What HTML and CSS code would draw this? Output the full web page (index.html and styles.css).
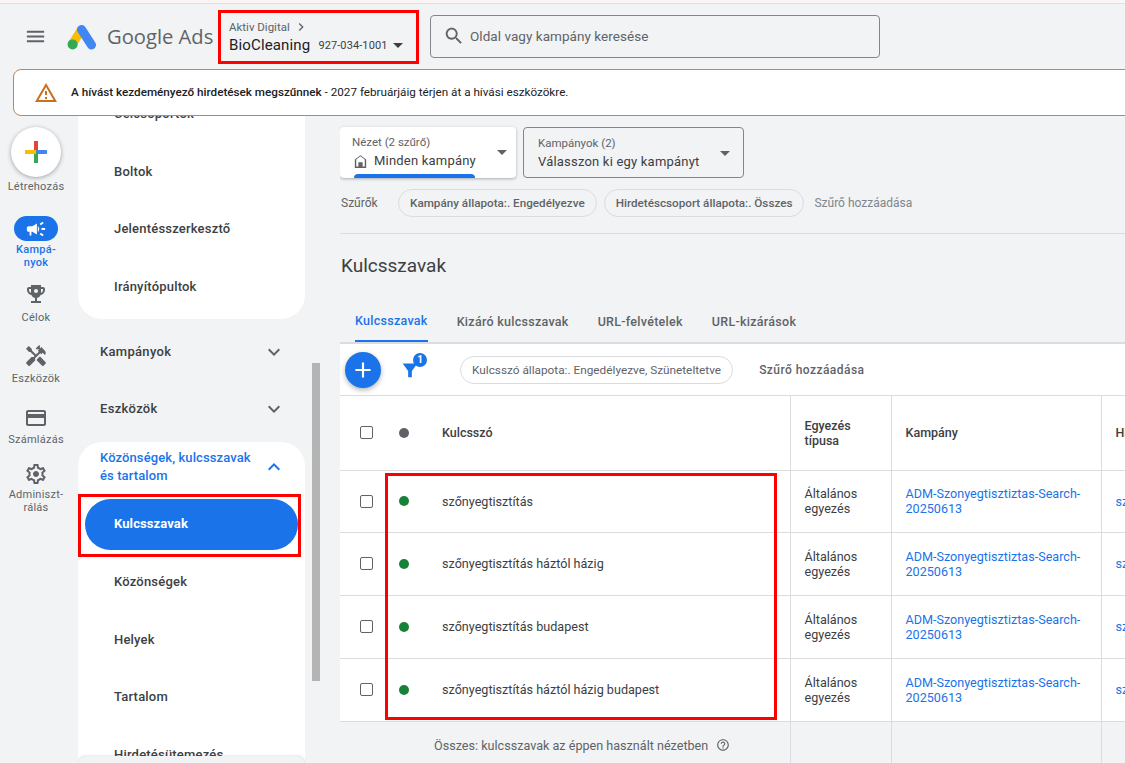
FILE: index.html
```html
<!DOCTYPE html>
<html lang="hu">
<head>
<meta charset="utf-8">
<title>Google Ads – Kulcsszavak</title>
<link rel="stylesheet" href="styles.css">
</head>
<body>
<div class="app">
  <div class="topline"></div>
  <header class="header">
    <svg class="menu-icon" viewBox="0 0 24 24"><path d="M3 18h18v-2H3v2zm0-5h18v-2H3v2zm0-7v2h18V6H3z"/></svg>
    <svg class="ads-logo" viewBox="0 0 30 26">
      <path d="M14.5 5.5 5.5 20" stroke="#fbbc04" stroke-width="9" fill="none"/>
      <path d="M14.5 5.5 24.5 21" stroke="#4285f4" stroke-width="9" stroke-linecap="round" fill="none"/>
      <circle cx="5.6" cy="20.4" r="5" fill="#34a853"/>
    </svg>
    <span class="ads-name">Google Ads</span>
    <div class="account">
      <div class="account-top">Aktiv Digital
        <svg class="crumb-icon" viewBox="0 0 24 24"><path d="M10 6L8.59 7.41 13.17 12l-4.58 4.59L10 18l6-6z"/></svg>
      </div>
      <div class="account-main"><span class="account-name">BioCleaning</span><span class="account-id">927-034-1001</span><span class="caret caret-dark"></span></div>
    </div>
    <div class="search">
      <svg class="search-icon" viewBox="0 0 24 24"><path d="M15.5 14h-.79l-.28-.27C15.41 12.59 16 11.11 16 9.5 16 5.91 13.09 3 9.5 3S3 5.91 3 9.5 5.91 16 9.5 16c1.61 0 3.09-.59 4.23-1.57l.27.28v.79l5 4.99L20.49 19l-4.99-5zm-6 0C7.01 14 5 11.99 5 9.5S7.01 5 9.5 5 14 7.01 14 9.5 11.99 14 9.5 14z"/></svg>
      <span>Oldal vagy kampány keresése</span>
    </div>
  </header>

  <div class="alert">
    <svg class="alert-icon" viewBox="0 0 24 24"><path d="M12 5.99L19.53 19H4.47L12 5.99M12 2L1 21h22L12 2zm1 14h-2v2h2v-2zm0-6h-2v4h2v-4z"/></svg>
    <p class="alert-text"><strong>A hívást kezdeményező hirdetések megszűnnek</strong> - 2027 februárjáig térjen át a hívási eszközökre.</p>
  </div>

  <div class="workspace">
    <nav class="rail">
      <button class="create" type="button" aria-label="Létrehozás">
        <svg class="create-plus" viewBox="0 0 24 24">
          <rect x="10" y="1" width="4" height="11" fill="#ea4335"/>
          <rect x="12" y="10" width="11" height="4" fill="#4285f4"/>
          <rect x="10" y="12" width="4" height="11" fill="#34a853"/>
          <rect x="1" y="10" width="11" height="4" fill="#fbbc04"/>
        </svg>
      </button>
      <span class="rail-label rail-label-create">Létrehozás</span>
      <div class="rail-item rail-item-active">
        <span class="rail-pill">
          <svg class="rail-icon-white" viewBox="0 0 24 24"><path d="M18 11v2h4v-2h-4zm-2 6.61c.96.71 2.21 1.65 3.2 2.39.4-.53.8-1.07 1.2-1.6-.99-.74-2.24-1.68-3.2-2.4-.4.54-.8 1.08-1.2 1.61zM20.4 5.6c-.4-.53-.8-1.07-1.2-1.6-.99.74-2.24 1.68-3.2 2.4.4.53.8 1.07 1.2 1.6.96-.72 2.21-1.65 3.2-2.4zM4 9c-1.1 0-2 .9-2 2v2c0 1.1.9 2 2 2h1v4h2v-4h1l5 3V6L8 9H4zm11.5 3c0-1.33-.58-2.53-1.5-3.35v6.69c.92-.81 1.5-2.01 1.5-3.34z"/></svg>
        </span>
        <span class="rail-label">Kampá-<br>nyok</span>
      </div>
      <div class="rail-item rail-item-goals">
        <svg class="rail-icon" viewBox="0 0 24 24"><path d="M19 5h-2V3H7v2H5c-1.1 0-2 .9-2 2v1c0 2.55 1.92 4.63 4.39 4.94.63 1.5 1.98 2.63 3.61 2.96V19H7v2h10v-2h-4v-3.1c1.63-.33 2.98-1.46 3.61-2.96C19.08 12.63 21 10.55 21 8V7c0-1.1-.9-2-2-2zM5 8V7h2v3.82C5.84 10.4 5 9.3 5 8zm14 0c0 1.3-.84 2.4-2 2.82V7h2v1z"/><circle cx="12" cy="9" r="2" fill="#f1f3f4"/></svg>
        <span class="rail-label">Célok</span>
      </div>
      <div class="rail-item rail-item-tools">
        <svg class="rail-icon" viewBox="0 0 24 24"><path d="M21.67 18.17l-5.3-5.3h-.99l-2.54 2.54v.99l5.3 5.3c.39.39 1.02.39 1.41 0l2.12-2.12c.39-.38.39-1.02 0-1.41z"/><path d="M17.34 10.19l1.41-1.41 2.12 2.12c1.17-1.17 1.17-3.07 0-4.24l-3.54-3.54-1.41 1.41V1.71l-.7-.71-3.54 3.54.71.71h2.83l-1.41 1.41 1.06 1.06-2.89 2.89-4.13-4.13V5.06L4.83 2.04 2 4.87 5.03 7.9h1.41l4.13 4.13-.85.85H7.61l-5.3 5.3c-.39.39-.39 1.02 0 1.41l2.12 2.12c.39.39 1.02.39 1.41 0l5.3-5.3v-2.12l5.15-5.15 1.05 1.05z"/></svg>
        <span class="rail-label">Eszközök</span>
      </div>
      <div class="rail-item rail-item-bill">
        <svg class="rail-icon" viewBox="0 0 24 24"><path d="M20 4H4c-1.11 0-1.99.89-1.99 2L2 18c0 1.11.89 2 2 2h16c1.11 0 2-.89 2-2V6c0-1.11-.89-2-2-2zm0 14H4v-6h16v6zm0-10H4V6h16v2z"/></svg>
        <span class="rail-label">Számlázás</span>
      </div>
      <div class="rail-item rail-item-admin">
        <svg class="rail-icon" viewBox="0 0 24 24"><path d="M19.43 12.98c.04-.32.07-.64.07-.98 0-.34-.03-.66-.07-.98l2.11-1.65c.19-.15.24-.42.12-.64l-2-3.46c-.09-.16-.26-.25-.44-.25-.06 0-.12.01-.17.03l-2.49 1c-.52-.4-1.08-.73-1.69-.98l-.38-2.65C14.46 2.18 14.25 2 14 2h-4c-.25 0-.46.18-.49.42l-.38 2.65c-.61.25-1.17.59-1.69.98l-2.49-1c-.06-.02-.12-.03-.18-.03-.17 0-.34.09-.43.25l-2 3.46c-.13.22-.07.49.12.64l2.11 1.65c-.04.32-.07.65-.07.98 0 .33.03.66.07.98l-2.11 1.65c-.19.15-.24.42-.12.64l2 3.46c.09.16.26.25.44.25.06 0 .12-.01.17-.03l2.49-1c.52.4 1.08.73 1.69.98l.38 2.65c.03.24.24.42.49.42h4c.25 0 .46-.18.49-.42l.38-2.65c.61-.25 1.17-.59 1.69-.98l2.49 1c.06.02.12.03.18.03.17 0 .34-.09.43-.25l2-3.46c.12-.22.07-.49-.12-.64l-2.11-1.65zm-1.98-1.71c.04.31.05.52.05.73 0 .21-.02.43-.05.73l-.14 1.13.89.7 1.08.84-.7 1.21-1.27-.51-1.04-.42-.9.68c-.43.32-.84.56-1.25.73l-1.06.43-.16 1.13-.2 1.35h-1.4l-.19-1.35-.16-1.13-1.06-.43c-.43-.18-.83-.41-1.23-.71l-.91-.7-1.06.43-1.27.51-.7-1.21 1.08-.84.89-.7-.14-1.13c-.03-.31-.05-.54-.05-.74s.02-.43.05-.73l.14-1.13-.89-.7-1.08-.84.7-1.21 1.27.51 1.04.42.9-.68c.43-.32.84-.56 1.25-.73l1.06-.43.16-1.13.2-1.35h1.39l.19 1.35.16 1.13 1.06.43c.43.18.83.41 1.23.71l.91.7 1.06-.43 1.27-.51.7 1.21-1.07.85-.89.7.14 1.13zM12 9c-1.66 0-3 1.34-3 3s1.34 3 3 3 3-1.34 3-3-1.34-3-3-3z"/></svg>
        <span class="rail-label">Adminiszt-<br>rálás</span>
      </div>
    </nav>

    <aside class="sidenav">
      <div class="nav-card nav-card-top">
        <div class="nav-link">Célcsoportok</div>
        <div class="nav-link">Boltok</div>
        <div class="nav-link">Jelentésszerkesztő</div>
        <div class="nav-link">Irányítópultok</div>
      </div>
      <div class="nav-group">Kampányok
        <svg class="nav-chevron" viewBox="0 0 24 24"><path d="M16.59 8.59L12 13.17 7.41 8.59 6 10l6 6 6-6z"/></svg>
      </div>
      <div class="nav-group">Eszközök
        <svg class="nav-chevron" viewBox="0 0 24 24"><path d="M16.59 8.59L12 13.17 7.41 8.59 6 10l6 6 6-6z"/></svg>
      </div>
      <div class="nav-card nav-card-open">
        <div class="nav-open-head">
          <span>Közönségek, kulcsszavak és tartalom</span>
          <svg class="nav-chevron nav-chevron-blue" viewBox="0 0 24 24"><path d="M12 8l-6 6 1.41 1.41L12 10.83l4.59 4.58L18 14z"/></svg>
        </div>
        <div class="nav-pill">Kulcsszavak</div>
        <div class="nav-link">Közönségek</div>
        <div class="nav-link">Helyek</div>
        <div class="nav-link">Tartalom</div>
        <div class="nav-link">Hirdetésütemezés</div>
      </div>
      <div class="nav-footer">A Google Ads alkalmazása</div>
    </aside>

    <div class="scroll-track"><div class="scroll-thumb"></div></div>

    <main class="main">
      <div class="pickers">
        <div class="picker picker-view">
          <span class="picker-small">Nézet (2 szűrő)</span>
          <span class="picker-value"><svg class="home-icon" viewBox="0 0 24 24"><path d="M12 3L4 9v12h16V9l-8-6zm6 16h-3v-6H9v6H6v-9.99l6-4.5 6 4.5V19z"/></svg>Minden kampány</span>
          <span class="caret"></span>
          <span class="picker-bar"></span>
        </div>
        <div class="picker picker-campaign">
          <span class="picker-small">Kampányok (2)</span>
          <span class="picker-value">Válasszon ki egy kampányt</span>
          <span class="caret"></span>
        </div>
      </div>
      <div class="filters">
        <span class="filters-label">Szűrők</span>
        <span class="chip">Kampány állapota:. Engedélyezve</span>
        <span class="chip">Hirdetéscsoport állapota:. Összes</span>
        <span class="filters-add">Szűrő hozzáadása</span>
      </div>
      <div class="divider"></div>
      <h1 class="page-title">Kulcsszavak</h1>
      <div class="tabs">
        <span class="tab tab-active">Kulcsszavak</span>
        <span class="tab">Kizáró kulcsszavak</span>
        <span class="tab">URL-felvételek</span>
        <span class="tab">URL-kizárások</span>
      </div>
      <div class="toolbar">
        <button class="fab" type="button" aria-label="Hozzáadás">
          <svg viewBox="0 0 24 24"><path d="M19 13h-6v6h-2v-6H5v-2h6V5h2v6h6v2z"/></svg>
        </button>
        <span class="filter-toggle">
          <svg viewBox="0 0 24 24"><path d="M4 5h16l-6 8v7h-4v-7z"/></svg>
          <span class="filter-badge">1</span>
        </span>
        <span class="chip chip-white">Kulcsszó állapota:. Engedélyezve, Szüneteltetve</span>
        <span class="toolbar-add">Szűrő hozzáadása</span>
      </div>
      <table class="grid">
        <colgroup>
          <col class="col-check"><col class="col-dot"><col class="col-key"><col class="col-match"><col class="col-camp"><col class="col-next">
        </colgroup>
        <thead>
          <tr class="row-head">
            <th><span class="checkbox"></span></th>
            <th><span class="dot dot-grey"></span></th>
            <th class="cell-key">Kulcsszó</th>
            <th class="cell-v">Egyezés<br>típusa</th>
            <th class="cell-v">Kampány</th>
            <th class="cell-v">Hirdetéscsoport</th>
          </tr>
        </thead>
        <tbody>
          <tr class="row">
            <td><span class="checkbox"></span></td><td><span class="dot"></span></td>
            <td class="cell-key">szőnyegtisztítás</td>
            <td class="cell-v">Általános<br>egyezés</td>
            <td class="cell-v"><a class="link">ADM-Szonyegtisztiztas-Search-<br>20250613</a></td>
            <td class="cell-v"><a class="link">szonyegtisztitas</a></td>
          </tr>
          <tr class="row">
            <td><span class="checkbox"></span></td><td><span class="dot"></span></td>
            <td class="cell-key">szőnyegtisztítás háztól házig</td>
            <td class="cell-v">Általános<br>egyezés</td>
            <td class="cell-v"><a class="link">ADM-Szonyegtisztiztas-Search-<br>20250613</a></td>
            <td class="cell-v"><a class="link">szonyegtisztitas</a></td>
          </tr>
          <tr class="row">
            <td><span class="checkbox"></span></td><td><span class="dot"></span></td>
            <td class="cell-key">szőnyegtisztítás budapest</td>
            <td class="cell-v">Általános<br>egyezés</td>
            <td class="cell-v"><a class="link">ADM-Szonyegtisztiztas-Search-<br>20250613</a></td>
            <td class="cell-v"><a class="link">szonyegtisztitas</a></td>
          </tr>
          <tr class="row">
            <td><span class="checkbox"></span></td><td><span class="dot"></span></td>
            <td class="cell-key">szőnyegtisztítás háztól házig budapest</td>
            <td class="cell-v">Általános<br>egyezés</td>
            <td class="cell-v"><a class="link">ADM-Szonyegtisztiztas-Search-<br>20250613</a></td>
            <td class="cell-v"><a class="link">szonyegtisztitas</a></td>
          </tr>
          <tr class="row-total">
            <td colspan="3" class="cell-total">Összes: kulcsszavak az éppen használt nézetben
              <svg class="help-icon" viewBox="0 0 24 24"><path d="M11 18h2v-2h-2v2zm1-16C6.48 2 2 6.48 2 12s4.48 10 10 10 10-4.48 10-10S17.52 2 12 2zm0 18c-4.41 0-8-3.59-8-8s3.59-8 8-8 8 3.59 8 8-3.59 8-8 8zm0-14c-2.21 0-4 1.79-4 4h2c0-1.1.9-2 2-2s2 .9 2 2c0 2-3 1.75-3 5h2c0-2.25 3-2.5 3-5 0-2.21-1.79-4-4-4z"/></svg>
            </td>
            <td class="cell-v"></td><td class="cell-v"></td><td class="cell-v"></td>
          </tr>
        </tbody>
      </table>
    </main>
  </div>

  <div class="mark mark-account"></div>
  <div class="mark mark-nav"></div>
  <div class="mark mark-rows"></div>
</div>
</body>
</html>
```

FILE: styles.css
```css
* { box-sizing: border-box; }
html, body { margin: 0; padding: 0; height: 100%; overflow: hidden; }
body { font-family: Roboto, "Liberation Sans", sans-serif; color: #3c4043; background: #f1f3f4; }

.app { position: relative; width: 1125px; height: 763px; overflow: hidden; display: flex; flex-direction: column; background: #f1f3f4; }
.topline { flex: none; height: 4px; background: #fbf6f6; border-bottom: 1px solid #e0e0e0; }

/* header */
.header { flex: none; height: 65px; display: flex; align-items: center; padding-left: 24px; }
.menu-icon { width: 23px; height: 23px; fill: #5f6368; }
.ads-logo { width: 30px; height: 26px; margin-left: 20px; }
.ads-name { font-family: "Open Sans", Roboto, sans-serif; font-size: 20.2px; color: #5f6368; margin: -2px 0 0 10px; width: 122px; white-space: nowrap; }
.account { width: 201px; display: flex; flex-direction: column; }
.account-top { display: flex; align-items: center; font-size: 11.5px; color: #5f6368; height: 17px; }
.crumb-icon { width: 16px; height: 16px; fill: #5f6368; margin-left: 3px; }
.account-main { display: flex; align-items: center; height: 20px; }
.account-name { font-size: 15px; letter-spacing: .15px; color: #202124; }
.account-id { font-size: 11px; letter-spacing: .1px; color: #3c4043; margin-left: 8px; }
.caret { display: block; width: 0; height: 0; border-left: 5px solid transparent; border-right: 5px solid transparent; border-top: 5px solid #5f6368; }
.caret-dark { border-top-color: #3c4043; margin-left: 6px; }
.search { width: 450px; height: 43px; display: flex; align-items: center; border: 1px solid #80868b; border-radius: 4px; padding-left: 12px; font-size: 13.5px; color: #5f6368; letter-spacing: .05px; margin-top: -1px; }
.search-icon { width: 22px; height: 22px; fill: #5f6368; margin-right: 5px; }

/* alert */
.alert { flex: none; height: 47px; margin-left: 13px; width: 1130px; display: flex; align-items: center; background: #fff; border: 1px solid #c98543; border-radius: 8px; padding-left: 20px; position: relative; z-index: 2; }
.alert-icon { width: 24px; height: 24px; fill: #c9701f; }
.alert-text { margin: -2px 0 0 13px; font-size: 11.7px; color: #202124; }
.alert-text strong { font-weight: 500; }

/* workspace */
.workspace { flex: 1; min-height: 0; display: flex; }

/* rail */
.rail { flex: none; width: 78px; padding: 11px 6px 0 0; display: flex; flex-direction: column; align-items: center; }
.create { width: 50px; height: 50px; flex: none; border: 0; border-radius: 50%; background: #fff; box-shadow: 0 1px 4px rgba(60,64,67,.45); display: flex; align-items: center; justify-content: center; padding: 0; }
.create-plus { width: 24px; height: 24px; }
.rail-label { display: block; font-size: 11px; line-height: 13px; text-align: center; color: #5f6368; letter-spacing: .25px; }
.rail-label-create { margin-top: 3px; }
.rail-item { display: flex; flex-direction: column; align-items: center; }
.rail-item .rail-label { margin-top: 4px; }
.rail-item-active { margin-top: 23px; }
.rail-item-active .rail-label { color: #1a73e8; font-weight: 500; margin-top: 2px; }
.rail-pill { width: 44px; height: 25px; border-radius: 13px; background: #1a73e8; display: flex; align-items: center; justify-content: center; }
.rail-icon-white { width: 22px; height: 22px; fill: #fff; }
.rail-icon { width: 24px; height: 24px; fill: #5f6368; }
.rail-item-goals { margin-top: 13px; }
.rail-item-goals .rail-label { margin-top: 5px; }
.rail-item-tools { margin-top: 20px; }
.rail-item-bill { margin-top: 21px; }
.rail-item-bill .rail-label { margin-top: 3px; }
.rail-item-admin { margin-top: 16px; }
.rail-item-admin .rail-label { margin-top: 2px; }

/* side navigation */
.sidenav { flex: none; width: 227px; position: relative; overflow: hidden; }
.nav-card { background: #fff; border-radius: 24px; }
.nav-card-top { margin: -31px 0 4px; padding-bottom: 4px; border-radius: 0 0 24px 24px; }
.nav-link { height: 57.5px; display: flex; align-items: center; padding-left: 36px; font-size: 13px; font-weight: 500; letter-spacing: .2px; color: #3c4043; white-space: nowrap; }
.nav-group { height: 57px; display: flex; align-items: center; justify-content: space-between; padding: 0 19px 0 22px; font-size: 13px; font-weight: 500; letter-spacing: .3px; color: #3c4043; }
.nav-chevron { width: 24px; height: 24px; fill: #5f6368; flex: none; }
.nav-card-open { margin-top: 5px; padding-bottom: 8px; }
.nav-open-head { height: 50px; display: flex; align-items: center; justify-content: space-between; padding: 0 19px 0 22px; font-size: 13px; font-weight: 500; letter-spacing: .1px; line-height: 18px; color: #1a73e8; }
.nav-open-head span { width: 165px; }
.nav-chevron-blue { fill: #1a73e8; }
.nav-pill { height: 51px; margin: 7px 7px 3px; padding: 0 0 2px 29px; border-radius: 26px; background: #1a73e8; color: #fff; display: flex; align-items: center; font-size: 13px; font-weight: 700; letter-spacing: .1px; }
.nav-footer { position: absolute; left: 0; right: 0; bottom: -9px; height: 16px; background: #f1f3f4; border-radius: 8px 8px 0 0; font-size: 11px; padding: 5px 0 0 36px; color: #5f6368; box-shadow: 0 0 2px rgba(60,64,67,.3); }

.scroll-track { flex: none; width: 35px; padding: 247px 0 0 7px; }
.scroll-thumb { width: 8px; height: 318px; background: #b4b4b4; }

/* main */
.main { flex: 1; min-width: 0; padding-top: 11px; overflow: hidden; }
.pickers { display: flex; gap: 7px; }
.picker { position: relative; height: 51px; border-radius: 4px; display: flex; flex-direction: column; }
.picker-view { width: 176px; background: #fff; box-shadow: 0 1px 3px rgba(60,64,67,.4); padding: 8px 0 0 12px; overflow: hidden; }
.picker-campaign { width: 221px; border: 1px solid #80868b; padding: 8px 0 0 14px; }
.picker-small { font-size: 11.5px; line-height: 14px; color: #5f6368; }
.picker-value { display: flex; align-items: center; font-size: 13px; letter-spacing: .2px; color: #3c4043; line-height: 18px; margin-top: 3px; white-space: nowrap; }
.home-icon { width: 17px; height: 17px; fill: #5f6368; margin-right: 5px; }
.picker .caret { position: absolute; right: 9px; top: 23px; }
.picker-campaign .caret { right: 13px; }
.picker-bar { position: absolute; left: 14px; width: 121px; bottom: -4px; height: 8px; border-radius: 4px 4px 0 0; background: #1a73e8; }

.filters { display: flex; align-items: center; margin-top: 11px; height: 28px; }
.filters-label { width: 57px; margin-left: 1px; font-size: 12px; color: #5f6368; }
.chip { height: 28px; display: flex; align-items: center; padding: 0 11px; border: 1px solid #dadce0; border-radius: 14px; font-size: 11.7px; font-weight: 500; color: #5f6368; white-space: nowrap; margin-right: 7px; }
.filters-add { margin-left: 3px; font-size: 12px; color: #80868b; }
.divider { height: 1px; background: #dadce0; margin-top: 16px; }
.page-title { margin: 20px 0 0 1px; height: 24px; font-size: 19px; line-height: 24px; font-weight: 400; color: #3c4043; }

.tabs { display: flex; height: 43px; margin-top: 23px; padding-left: 15px; border-bottom: 2px solid #dadce0; gap: 29px; }
.tab { height: 41px; display: flex; align-items: center; font-size: 12.5px; font-weight: 500; letter-spacing: .28px; color: #5f6368; white-space: nowrap; }
.tab-active { color: #1a73e8; border-bottom: 2px solid #1a73e8; }

.toolbar { height: 52px; display: flex; align-items: center; background: #fff; padding-left: 5px; border-bottom: 1px solid #dadce0; }
.fab { width: 36px; height: 36px; border: 0; padding: 0; border-radius: 50%; background: #1a73e8; box-shadow: 0 2px 5px rgba(60,64,67,.4); display: flex; align-items: center; justify-content: center; }
.fab svg { width: 26px; height: 26px; fill: #fff; }
.filter-toggle { position: relative; width: 22px; height: 22px; margin-left: 18px; }
.filter-toggle svg { width: 22px; height: 22px; fill: #1a73e8; display: block; }
.filter-badge { position: absolute; right: -6px; top: -6px; width: 14px; height: 14px; border-radius: 50%; background: #1a73e8; color: #fff; font-size: 10px; font-weight: 700; line-height: 14px; text-align: center; }
.chip-white { margin-left: 39px; font-weight: 400; color: #5f6368; font-size: 11.8px; margin-right: 0; }
.toolbar-add { margin-left: 26px; font-size: 12px; font-weight: 500; letter-spacing: .45px; color: #5f6368; }

/* table */
.grid { width: 900px; table-layout: fixed; border-collapse: collapse; background: #fff; font-size: 12.6px; color: #3c4043; }
.col-check { width: 52px; }
.col-dot { width: 36px; }
.col-key { width: 362px; }
.col-match { width: 101px; }
.col-camp { width: 210px; }
.col-next { width: 139px; }
.grid th, .grid td { padding: 0; border-bottom: 1px solid #dadce0; text-align: left; font-weight: 400; line-height: 15px; }
.row-head { height: 74px; }
.row-head th { font-size: 12.5px; font-weight: 500; }
.row { height: 63px; }
.row:first-child { height: 62px; }
.row-total { height: 60px; background: #f1f3f4; }
.cell-key { padding-left: 14px !important; }
.cell-v { border-left: 1px solid #dadce0; padding-left: 14px !important; white-space: nowrap; overflow: hidden; }
.checkbox { display: block; width: 13px; height: 13px; margin-left: 20px; border: 1px solid #5f6368; border-radius: 2px; background: #fff; }
.dot { display: block; width: 10px; height: 10px; border-radius: 50%; background: #188038; margin-left: 7px; }
.dot-grey { background: #5f6368; }
.link { color: #1a73e8; }
.cell-total { padding: 0 0 12px 94px !important; font-size: 12.6px; color: #5f6368; white-space: nowrap; }
.help-icon { width: 14px; height: 14px; fill: #5f6368; vertical-align: -2px; margin-left: 5px; }

/* red annotations drawn over the screenshot */
.mark { position: absolute; border: 3px solid #ff0000; z-index: 5; pointer-events: none; }
.mark-account { left: 218px; top: 10px; width: 201px; height: 54px; }
.mark-nav { left: 78px; top: 494px; width: 223px; height: 63px; }
.mark-rows { left: 385px; top: 473px; width: 392px; height: 247px; }
```
